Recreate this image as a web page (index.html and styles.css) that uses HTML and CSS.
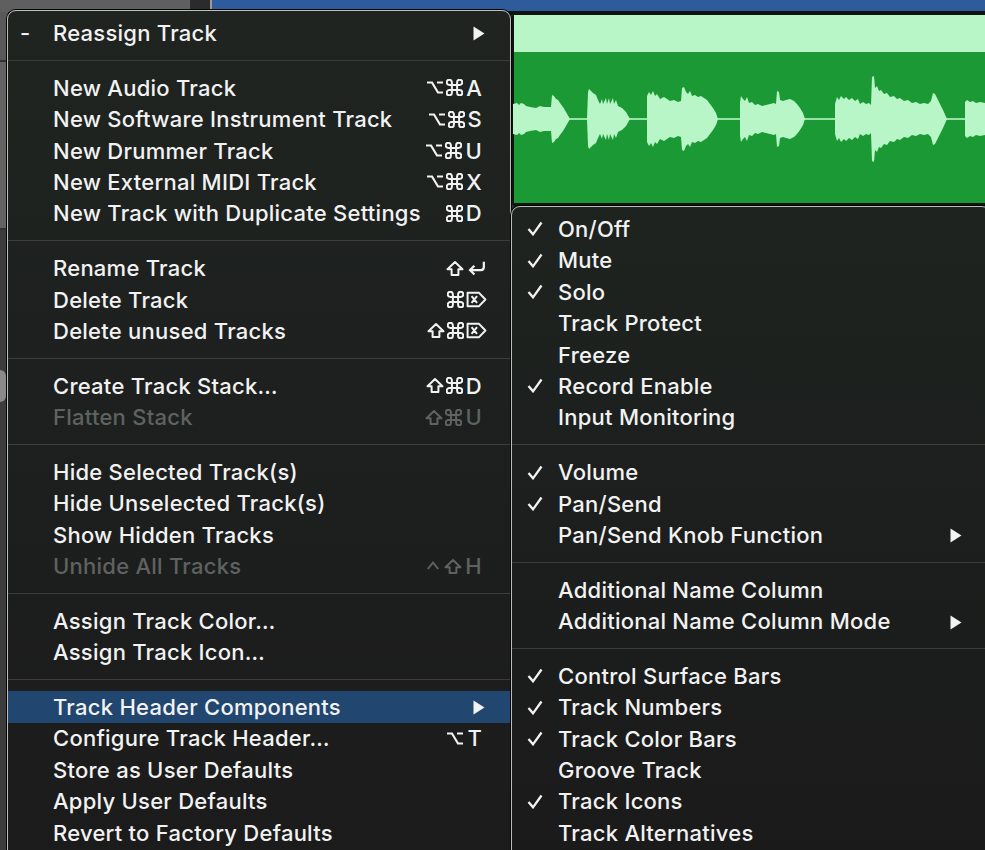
FILE: index.html
```html
<!DOCTYPE html>
<html lang="en">
<head>
<meta charset="utf-8">
<title>Track Header Components</title>
<link rel="stylesheet" href="styles.css">
</head>
<body>
<svg class="defs" aria-hidden="true">
  <symbol id="k-opt" viewBox="0 0 18 16"><path d="M1 3 H6 L12 13 H17 M11 3 H17" fill="none" stroke="currentColor" stroke-width="2.2"/></symbol>
  <symbol id="k-cmd" viewBox="2.2 2.2 19.6 19.6"><path d="M15 6v12a3 3 0 1 0 3-3H6a3 3 0 1 0 3 3V6a3 3 0 1 0-3 3h12a3 3 0 1 0-3-3" fill="none" stroke="currentColor" stroke-width="2.3"/></symbol>
  <symbol id="k-shift" viewBox="0 0 18 16"><path d="M9 1.5 L16.5 8.8 H12.4 V14.5 H5.6 V8.8 H1.5 Z" fill="none" stroke="currentColor" stroke-width="2" stroke-linejoin="round"/></symbol>
  <symbol id="k-ret" viewBox="0 0 20 16"><path d="M17 1.5 V6.5 Q17 9.5 14 9.5 H4 M8 5.3 L3.8 9.5 L8 13.7" fill="none" stroke="currentColor" stroke-width="2.1"/></symbol>
  <symbol id="k-del" viewBox="0 0 20 16"><path d="M1.5 1.5 H12.2 L18.5 8 L12.2 14.5 H1.5 Z M5.3 4.8 L10.5 11.2 M10.5 4.8 L5.3 11.2" fill="none" stroke="currentColor" stroke-width="1.9" stroke-linejoin="round"/></symbol>
  <symbol id="k-ctrl" viewBox="0 0 14 16"><path d="M1.8 10.5 L7 4 L12.2 10.5" fill="none" stroke="currentColor" stroke-width="2"/></symbol>
  <symbol id="i-check" viewBox="0 0 16 15"><path d="M1.5 8 L6 13.3 L14.5 1.5" fill="none" stroke="currentColor" stroke-width="2.3"/></symbol>
  <symbol id="i-arrow" viewBox="0 0 12 15"><path d="M0.5 0.5 L11.5 7.5 L0.5 14.5 Z" fill="currentColor"/></symbol>
</svg>

<div class="screen">
  <svg class="backdrop" width="985" height="850" viewBox="0 0 985 850" aria-hidden="true">
    <rect width="985" height="850" fill="#2a2a2a"/>
    <rect x="0" y="0" width="190" height="12" fill="#5f5f5f"/>
    <rect x="190" y="0" width="20" height="12" fill="#2b2b2b"/>
    <rect x="210" y="0" width="2" height="12" fill="#9a9a9a"/>
    <rect x="212" y="0" width="773" height="11" fill="#2d5b9b"/>
    <rect x="212" y="11" width="773" height="4" fill="#0f1410"/>
    <rect x="0" y="12" width="8" height="48" fill="#595959"/>
    <rect x="0" y="60" width="8" height="2" fill="#333"/>
    <rect x="0" y="62" width="8" height="166" fill="#626262"/>
    <rect x="0" y="228" width="8" height="2" fill="#333"/>
    <rect x="0" y="230" width="8" height="620" fill="#3c3c3c"/>
    <rect x="-6" y="370" width="12" height="32" rx="6" fill="#8a8a8a"/>
    <rect x="512" y="13" width="480" height="194" rx="5" fill="#0f140f"/>
    <rect x="514" y="15" width="475" height="37" fill="#b9f6c7"/>
    <rect x="514" y="52" width="475" height="151" fill="#1a9934"/>
    <g id="wav" fill="#b9f6c7">
      <polygon points="513,119 513,104 517,103 519,105 521,103 524,104 526,106 530,107 536,108 540,106 544,107 548,107 551,107 552,95 554,96 556,99 558,100 560,103 563,107 566,112 570,119"/>
      <polygon points="587,119 588,92 589,89 591,91 593,93 596,95 598,100 600,104 602,99 603,104 606,98 607,104 609,98 610,104 613,98 614,104 616,100 618,106 622,108 626,112 630,119"/>
      <polygon points="647,119 647,96 649,92 651,95 653,91 655,96 657,94 660,99 664,97 667,99 670,101 674,100 678,102 681,101 682,88 684,87 686,92 688,94 690,91 692,96 695,95 698,97 701,96 704,98 707,100 710,104 713,108 716,113 718,119"/>
      <polygon points="740,119 740,102 741,96 743,99 745,101 747,97 749,103 752,102 755,105 758,104 762,106 766,105 770,104 774,103 776,104 777,91 779,92 780,100 783,101 786,100 790,99 794,101 797,104 800,108 803,113 805,119"/>
      <polygon points="835,119 835,104 837,97 839,100 841,96 844,99 846,97 849,100 852,98 855,101 858,99 860,104 863,102 866,104 869,103 871,105 872,77 874,76 875,88 877,86 879,91 881,90 884,94 887,93 890,97 894,96 897,99 900,98 904,101 908,100 912,103 916,102 920,104 924,103 928,104 931,101 933,93 935,94 937,98 940,104 943,110 947,119"/>
      <polygon points="965,119 965,102 967,100 970,102 973,101 976,103 980,102 985,103 985,119"/>
    </g>
    <use href="#wav" transform="translate(0,238) scale(1,-1)"/>
    <rect x="513" y="118.2" width="472" height="1.6" fill="#b9f6c7"/>
  </svg>

  <div class="menu main">
    <div class="row"><span class="mark dash">-</span><span class="label">Reassign Track</span><svg class="arrow"><use href="#i-arrow"/></svg></div>
    <div class="sep"></div>
    <div class="row"><span class="mark"></span><span class="label">New Audio Track</span><span class="keys"><svg class="k"><use href="#k-opt"/></svg><svg class="k cmd"><use href="#k-cmd"/></svg><span class="ch">A</span></span></div>
    <div class="row"><span class="mark"></span><span class="label">New Software Instrument Track</span><span class="keys"><svg class="k"><use href="#k-opt"/></svg><svg class="k cmd"><use href="#k-cmd"/></svg><span class="ch">S</span></span></div>
    <div class="row"><span class="mark"></span><span class="label">New Drummer Track</span><span class="keys"><svg class="k"><use href="#k-opt"/></svg><svg class="k cmd"><use href="#k-cmd"/></svg><span class="ch">U</span></span></div>
    <div class="row"><span class="mark"></span><span class="label">New External MIDI Track</span><span class="keys"><svg class="k"><use href="#k-opt"/></svg><svg class="k cmd"><use href="#k-cmd"/></svg><span class="ch">X</span></span></div>
    <div class="row"><span class="mark"></span><span class="label">New Track with Duplicate Settings</span><span class="keys"><svg class="k cmd"><use href="#k-cmd"/></svg><span class="ch">D</span></span></div>
    <div class="sep"></div>
    <div class="row"><span class="mark"></span><span class="label">Rename Track</span><span class="keys"><svg class="k"><use href="#k-shift"/></svg><svg class="k wide"><use href="#k-ret"/></svg></span></div>
    <div class="row"><span class="mark"></span><span class="label">Delete Track</span><span class="keys"><svg class="k cmd"><use href="#k-cmd"/></svg><svg class="k wide"><use href="#k-del"/></svg></span></div>
    <div class="row"><span class="mark"></span><span class="label">Delete unused Tracks</span><span class="keys"><svg class="k"><use href="#k-shift"/></svg><svg class="k cmd"><use href="#k-cmd"/></svg><svg class="k wide"><use href="#k-del"/></svg></span></div>
    <div class="sep"></div>
    <div class="row"><span class="mark"></span><span class="label">Create Track Stack…</span><span class="keys"><svg class="k"><use href="#k-shift"/></svg><svg class="k cmd"><use href="#k-cmd"/></svg><span class="ch">D</span></span></div>
    <div class="row disabled"><span class="mark"></span><span class="label">Flatten Stack</span><span class="keys"><svg class="k"><use href="#k-shift"/></svg><svg class="k cmd"><use href="#k-cmd"/></svg><span class="ch">U</span></span></div>
    <div class="sep"></div>
    <div class="row"><span class="mark"></span><span class="label">Hide Selected Track(s)</span></div>
    <div class="row"><span class="mark"></span><span class="label">Hide Unselected Track(s)</span></div>
    <div class="row"><span class="mark"></span><span class="label">Show Hidden Tracks</span></div>
    <div class="row disabled"><span class="mark"></span><span class="label">Unhide All Tracks</span><span class="keys"><svg class="k ctrl"><use href="#k-ctrl"/></svg><svg class="k"><use href="#k-shift"/></svg><span class="ch">H</span></span></div>
    <div class="sep"></div>
    <div class="row"><span class="mark"></span><span class="label">Assign Track Color…</span></div>
    <div class="row"><span class="mark"></span><span class="label">Assign Track Icon…</span></div>
    <div class="sep"></div>
    <div class="row hl"><span class="mark"></span><span class="label">Track Header Components</span><svg class="arrow"><use href="#i-arrow"/></svg></div>
    <div class="row"><span class="mark"></span><span class="label">Configure Track Header…</span><span class="keys"><svg class="k"><use href="#k-opt"/></svg><span class="ch">T</span></span></div>
    <div class="row"><span class="mark"></span><span class="label">Store as User Defaults</span></div>
    <div class="row"><span class="mark"></span><span class="label">Apply User Defaults</span></div>
    <div class="row"><span class="mark"></span><span class="label">Revert to Factory Defaults</span></div>
  </div>

  <div class="menu sub">
    <div class="row"><span class="mark"><svg class="check"><use href="#i-check"/></svg></span><span class="label">On/Off</span></div>
    <div class="row"><span class="mark"><svg class="check"><use href="#i-check"/></svg></span><span class="label">Mute</span></div>
    <div class="row"><span class="mark"><svg class="check"><use href="#i-check"/></svg></span><span class="label">Solo</span></div>
    <div class="row"><span class="mark"></span><span class="label">Track Protect</span></div>
    <div class="row"><span class="mark"></span><span class="label">Freeze</span></div>
    <div class="row"><span class="mark"><svg class="check"><use href="#i-check"/></svg></span><span class="label">Record Enable</span></div>
    <div class="row"><span class="mark"></span><span class="label">Input Monitoring</span></div>
    <div class="sep"></div>
    <div class="row"><span class="mark"><svg class="check"><use href="#i-check"/></svg></span><span class="label">Volume</span></div>
    <div class="row"><span class="mark"><svg class="check"><use href="#i-check"/></svg></span><span class="label">Pan/Send</span></div>
    <div class="row"><span class="mark"></span><span class="label">Pan/Send Knob Function</span><svg class="arrow"><use href="#i-arrow"/></svg></div>
    <div class="sep"></div>
    <div class="row"><span class="mark"></span><span class="label">Additional Name Column</span></div>
    <div class="row"><span class="mark"></span><span class="label">Additional Name Column Mode</span><svg class="arrow"><use href="#i-arrow"/></svg></div>
    <div class="sep"></div>
    <div class="row"><span class="mark"><svg class="check"><use href="#i-check"/></svg></span><span class="label">Control Surface Bars</span></div>
    <div class="row"><span class="mark"><svg class="check"><use href="#i-check"/></svg></span><span class="label">Track Numbers</span></div>
    <div class="row"><span class="mark"><svg class="check"><use href="#i-check"/></svg></span><span class="label">Track Color Bars</span></div>
    <div class="row"><span class="mark"></span><span class="label">Groove Track</span></div>
    <div class="row"><span class="mark"><svg class="check"><use href="#i-check"/></svg></span><span class="label">Track Icons</span></div>
    <div class="row"><span class="mark"></span><span class="label">Track Alternatives</span></div>
  </div>
</div>
</body>
</html>
```

FILE: styles.css
```css
html, body {
  margin: 0;
  padding: 0;
  width: 985px;
  height: 850px;
  overflow: hidden;
  background: #1b1b1b;
}

.defs {
  position: absolute;
  width: 0;
  height: 0;
  overflow: hidden;
}

.screen {
  position: relative;
  width: 985px;
  height: 850px;
  overflow: hidden;
  font-family: "Inter", "Noto Sans", "Liberation Sans", sans-serif;
}

.backdrop {
  position: absolute;
  left: 0;
  top: 0;
  display: block;
}

.menu {
  position: absolute;
  box-sizing: border-box;
  display: flex;
  flex-direction: column;
  border: 1px solid #bdbdbd;
  border-radius: 9px;
  box-shadow: 0 0 0 1px #050505;
  color: #f2f2f2;
  font-size: 22px;
  font-weight: 500;
  letter-spacing: 0.25px;
  padding: 6.3px 0 24px;
}

.main {
  left: 7px;
  top: 10px;
  width: 504px;
  background: linear-gradient(180deg, #1f2421 0%, #1d201e 45%, #1b1b1b 100%);
}

.sub {
  left: 511px;
  top: 206px;
  width: 480px;
  background: linear-gradient(180deg, #1e2320 0%, #1c1f1d 45%, #1a1a1a 100%);
}

.row {
  display: flex;
  align-items: center;
  flex: none;
  height: 31.4px;
  padding: 0 25px 0 12px;
  white-space: nowrap;
}

.sub .row {
  padding: 0 28px 0 15px;
}

.mark {
  flex: none;
  width: 33px;
  display: flex;
  align-items: center;
}

.sub .mark {
  width: 31px;
}

.label {
  flex: 1;
}

.row.disabled {
  color: #5e6260;
}

.row.hl {
  background: #21466f;
}

.sep {
  flex: none;
  height: 23.4px;
  display: flex;
  align-items: center;
}

.sep::before {
  content: "";
  flex: 1;
  height: 1px;
  background: #3a3d3b;
}

.keys {
  display: flex;
  align-items: center;
  gap: 2px;
  margin-right: 3px;
}

.k {
  width: 18px;
  height: 17px;
  flex: none;
}

.k.cmd {
  width: 17px;
  height: 17px;
}

.k.wide {
  width: 21px;
  height: 17px;
  margin-right: -5px;
}

.k.ctrl {
  width: 14px;
  margin-right: 2px;
}

.ch {
  margin-left: 1px;
}

.arrow {
  width: 12px;
  height: 15px;
  flex: none;
  margin-top: 2px;
}

.check {
  width: 16px;
  height: 15px;
}
```
